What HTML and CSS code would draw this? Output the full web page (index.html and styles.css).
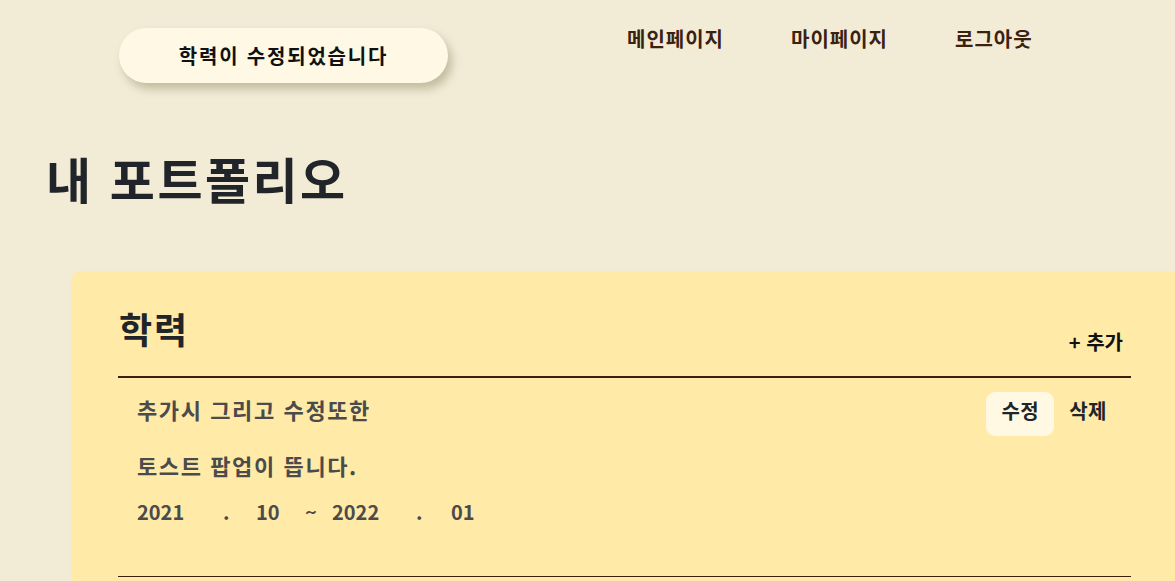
FILE: index.html
```html
<!DOCTYPE html>
<html lang="ko">
<head>
<meta charset="utf-8">
<title>내 포트폴리오</title>
<link rel="stylesheet" href="styles.css">
</head>
<body>
<div class="page">
  <header class="topbar">
    <nav class="nav">
      <a class="nav-link" href="#">메인페이지</a>
      <a class="nav-link" href="#">마이페이지</a>
      <a class="nav-link" href="#">로그아웃</a>
    </nav>
  </header>
  <div class="toast">학력이 수정되었습니다</div>
  <main class="content">
    <h1 class="title">내 포트폴리오</h1>
    <section class="card">
      <div class="card-head">
        <h2 class="card-title">학력</h2>
        <button class="add-btn">+ 추가</button>
      </div>
      <div class="item">
        <div class="item-body">
          <p class="line">추가시 그리고 수정또한</p>
          <p class="line second">토스트 팝업이 뜹니다.</p>
          <div class="dates">
            <span class="d-year">2021</span>
            <span class="d-dot">.</span>
            <span class="d-month">10</span>
            <span class="d-tilde">~</span>
            <span class="d-year2">2022</span>
            <span class="d-dot2">.</span>
            <span class="d-month2">01</span>
          </div>
        </div>
        <div class="actions">
          <button class="act-btn edit">수정</button>
          <button class="act-btn del">삭제</button>
        </div>
      </div>
    </section>
  </main>
</div>
</body>
</html>
```

FILE: styles.css
```css
html, body {
  margin: 0;
  padding: 0;
  overflow: hidden;
}
body {
  background: #f2ecd7;
  font-family: "Noto Sans CJK KR", "Noto Sans", sans-serif;
  font-weight: 700;
}
.page {
  position: relative;
  width: 1175px;
  min-height: 581px;
  overflow: hidden;
}
.topbar {
  display: flex;
  padding-top: 27px;
  padding-left: 627px;
}
.nav {
  display: flex;
  gap: 67px;
}
.nav-link {
  font-size: 20px;
  line-height: 24px;
  color: #3b220f;
  text-decoration: none;
  letter-spacing: 1px;
}
.toast {
  position: absolute;
  left: 119px;
  top: 28px;
  width: 329px;
  height: 55px;
  border-radius: 28px;
  background: #fef8e4;
  box-shadow: 4px 6px 10px rgba(110, 95, 55, 0.35);
  display: flex;
  align-items: center;
  justify-content: center;
  font-size: 20px;
  color: #111;
  letter-spacing: 1.8px;
}
.content {
  display: flex;
  flex-direction: column;
}
.title {
  margin: 98px 0 0 46px;
  font-size: 49px;
  line-height: 58px;
  color: #212529;
  font-weight: 700;
  letter-spacing: 2.5px;
}
.card {
  margin: 64px 0 0 71px;
  width: 1107px;
  min-height: 330px;
  box-sizing: border-box;
  padding: 36px 47px 0 47px;
  background: #ffeaa7;
  border-radius: 10px 0 0 0;
}
.card-head {
  display: flex;
  justify-content: space-between;
  align-items: flex-end;
  border-bottom: 2px solid #3a200a;
}
.card-title {
  margin: 0 0 27px 1px;
  font-size: 36px;
  line-height: 42px;
  color: #212529;
  font-weight: 700;
  letter-spacing: 2px;
}
.add-btn {
  margin: 0 8px 22px 0;
  padding: 0;
  border: 0;
  background: none;
  font-family: inherit;
  font-weight: 700;
  font-size: 20px;
  line-height: 24px;
  color: #111;
}
.item {
  display: flex;
  justify-content: space-between;
  align-items: flex-start;
  padding: 14px 9px 50px 19px;
  border-bottom: 1px solid #3a200a;
}
.item-body {
  margin-top: 3px;
  color: #4b4b4b;
}
.line {
  margin: 0;
  font-size: 22px;
  line-height: 28px;
  letter-spacing: 1.6px;
}
.line.second {
  margin-top: 28px;
}
.dates {
  display: flex;
  margin-top: 19px;
  font-size: 20px;
  line-height: 28px;
}
.d-year { width: 86px; }
.d-dot { width: 33px; }
.d-month { width: 49px; }
.d-tilde { width: 27px; }
.d-year2 { width: 84px; }
.d-dot2 { width: 35px; }
.actions {
  display: flex;
}
.act-btn {
  border: 0;
  background: none;
  font-family: inherit;
  font-weight: 700;
  font-size: 20px;
  line-height: 24px;
  padding: 7px 15px 13px 15px;
  color: #212529;
  border-radius: 9px;
  letter-spacing: 0.5px;
}
.act-btn.edit {
  background: #fff8e3;
}
```
